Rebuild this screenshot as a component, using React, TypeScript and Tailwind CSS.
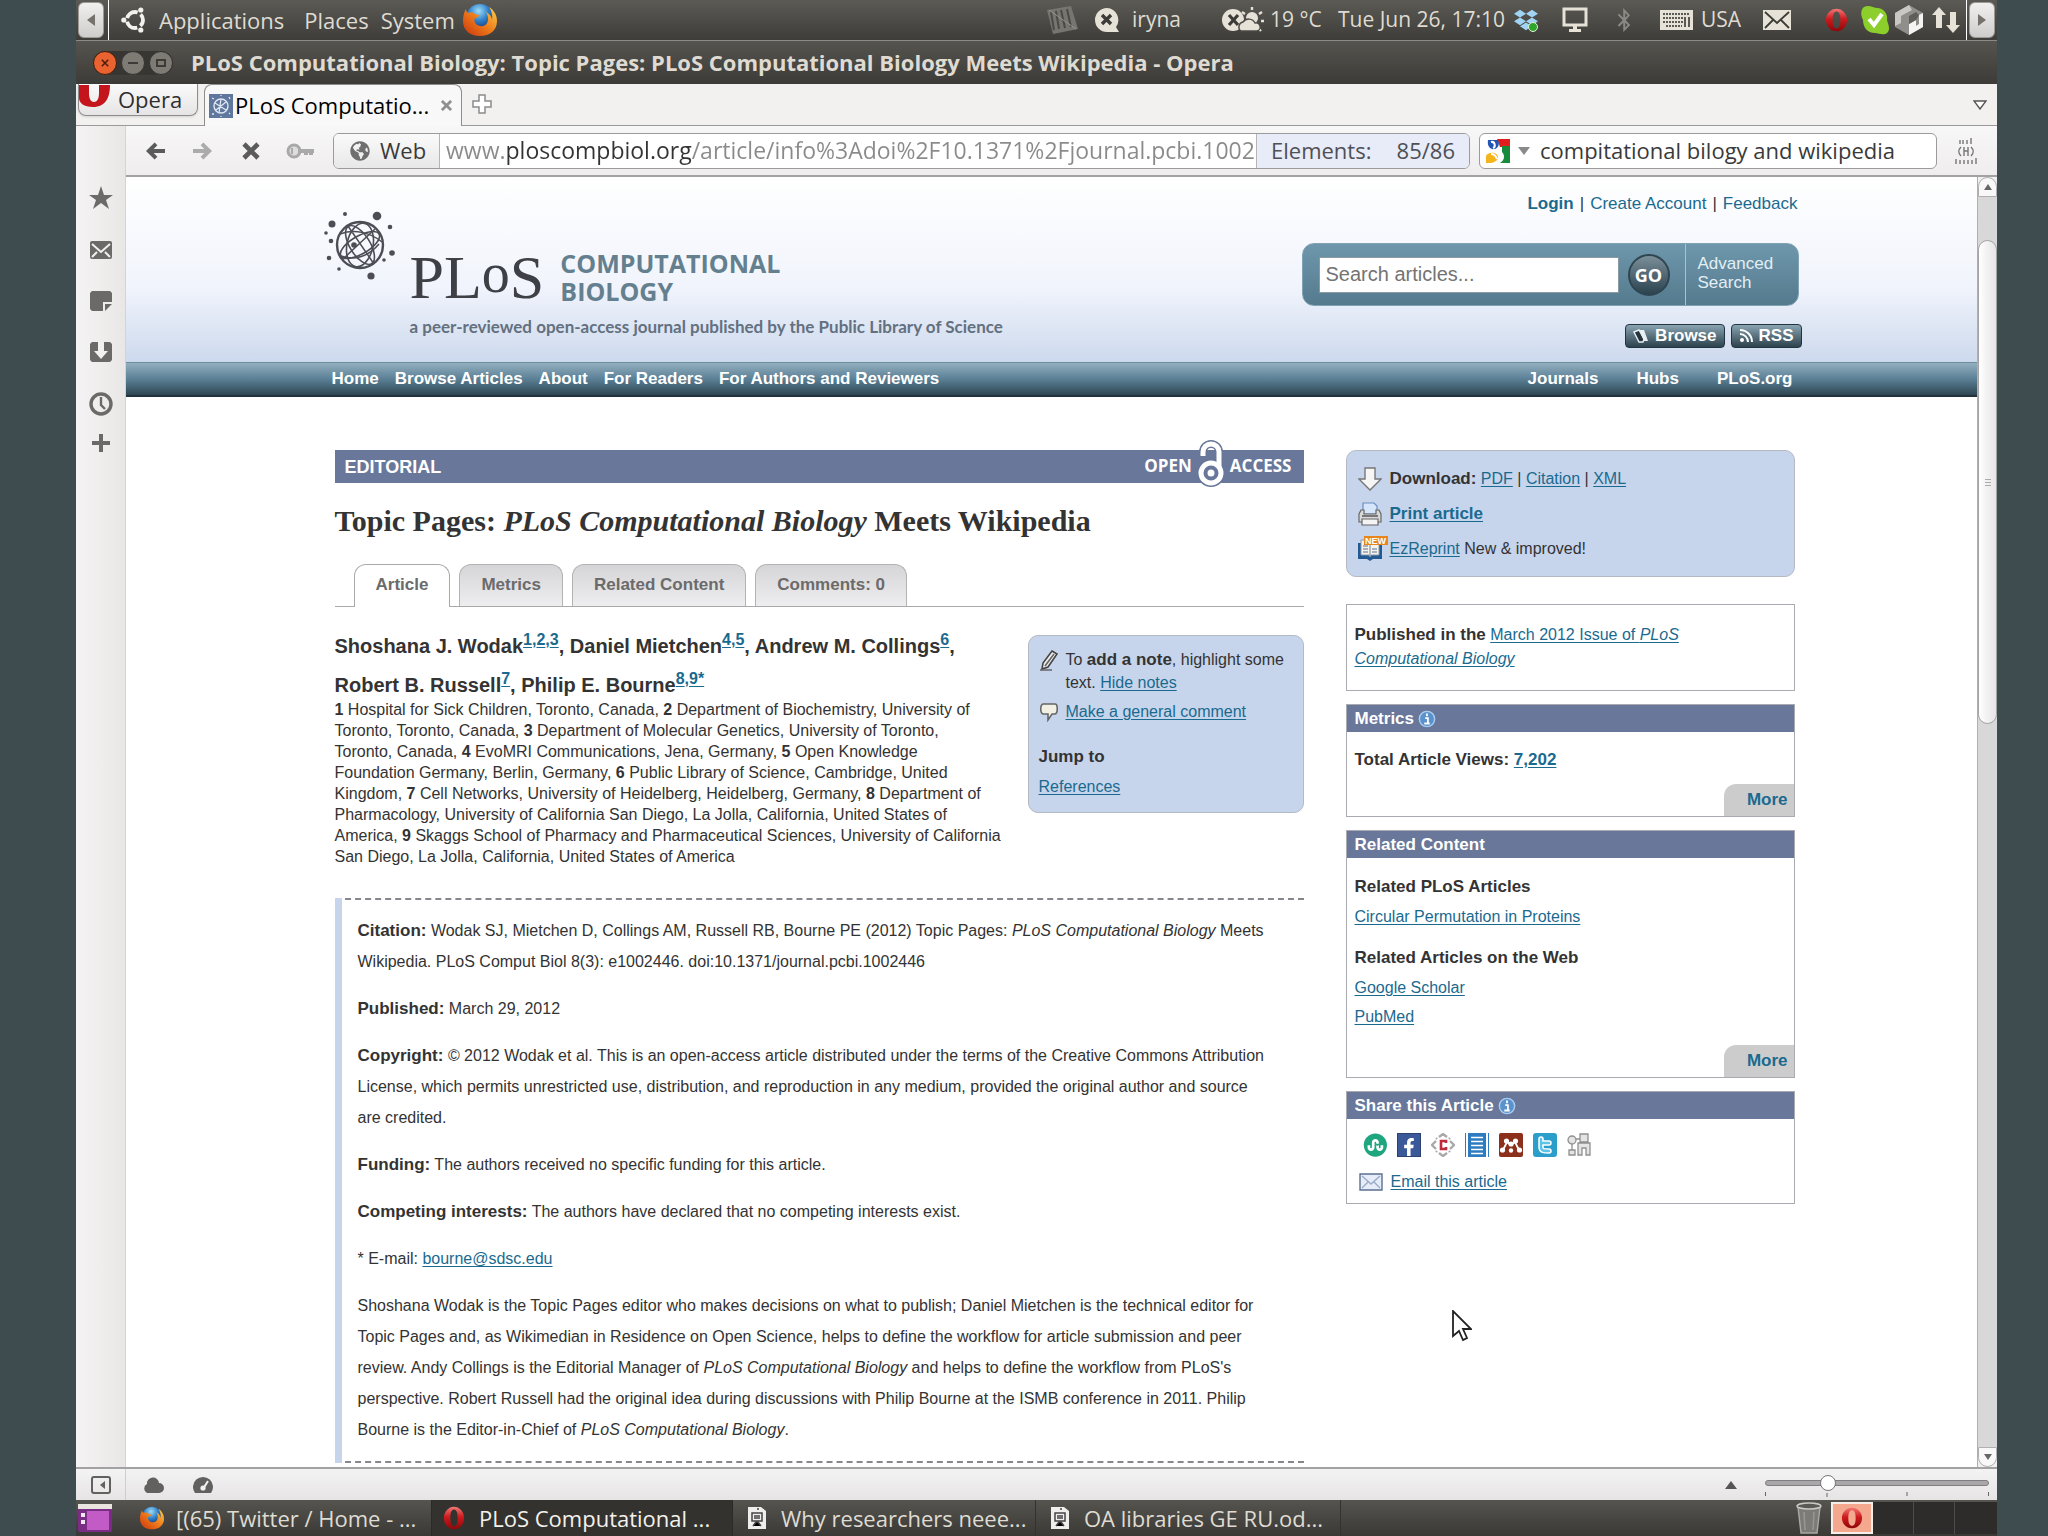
import { Fragment, type ReactNode } from "react";
import { FaBluetoothB, FaDropbox, FaFacebookF, FaGlobeAmericas, FaStumbleuponCircle } from "react-icons/fa";

const uiFont = "font-['Open_Sans','Noto_Sans',sans-serif]";
const pageFont = "font-['Liberation_Sans',Arial,sans-serif]";

const link = "text-[#1a6a8f] underline underline-offset-2";

function UbuntuIcon({ className }: { className: string }) {
  return (
    <svg viewBox="0 0 26 26" className={className} aria-hidden="true">
      <circle cx="14" cy="13" r="8" fill="none" stroke="#f3f1ec" strokeWidth="3.8" strokeDasharray="13.25 3.5" strokeDashoffset="6.6" />
      <circle cx="2.8" cy="13" r="2.6" fill="#f3f1ec" />
      <circle cx="19.8" cy="3" r="2.6" fill="#f3f1ec" />
      <circle cx="19.8" cy="23" r="2.6" fill="#f3f1ec" />
    </svg>
  );
}

function FirefoxIcon({ className }: { className: string }) {
  return (
    <svg viewBox="0 0 34 34" className={className} aria-hidden="true">
      <defs>
        <radialGradient id="globe" cx="45%" cy="25%" r="70%">
          <stop offset="0" stopColor="#9fdcf7" />
          <stop offset="0.5" stopColor="#2f7fc9" />
          <stop offset="1" stopColor="#12306f" />
        </radialGradient>
        <linearGradient id="fox" x1="0" y1="1" x2="1" y2="0">
          <stop offset="0" stopColor="#c9330c" />
          <stop offset="0.5" stopColor="#ee7a1b" />
          <stop offset="1" stopColor="#fbd24a" />
        </linearGradient>
      </defs>
      <circle cx="17" cy="15" r="14" fill="url(#globe)" />
      <path
        d="M3 6c0 2 1 3 2 4 2-1 5-1 7 1l4 1c0 2-2 3-4 3-1 2-1 4 1 6 3 3 9 3 11-1 2-3 1-8-1-11 4 2 6 5 6 8 1-5-1-10-3-13 5 3 8 8 8 14 0 9-7 15-17 15S0 27 0 18C0 13 1 9 3 6z"
        fill="url(#fox)"
      />
    </svg>
  );
}

function OperaIcon({ className }: { className: string }) {
  return (
    <svg viewBox="0 0 24 34" preserveAspectRatio="none" className={className} aria-hidden="true">
      <defs>
        <linearGradient id="opera" x1="0" y1="0" x2="0" y2="1">
          <stop offset="0" stopColor="#f07a78" />
          <stop offset="0.45" stopColor="#cf1a1d" />
          <stop offset="1" stopColor="#8d0709" />
        </linearGradient>
      </defs>
      <path
        fillRule="evenodd"
        d="M12 1c6 0 11 7 11 16s-5 16-11 16S1 26 1 17 6 1 12 1zm0 4c-3 0-4 5-4 12s1 12 4 12 4-5 4-12-1-12-4-12z"
        fill="url(#opera)"
      />
    </svg>
  );
}

function PanelArrow({ left }: { left?: boolean }) {
  return (
    <button
      aria-label={left ? "Hide panel left" : "Hide panel right"}
      className="flex h-9 w-[26px] shrink-0 items-center justify-center rounded-md border border-[#9c9a97] bg-gradient-to-b from-[#f1f0ef] to-[#cfcdcb]"
    >
      <svg viewBox="0 0 10 12" className="h-3 w-2.5" aria-hidden="true">
        <path d={left ? "M9 0v12L1 6z" : "M1 0v12l8-6z"} fill="#75726e" />
      </svg>
    </button>
  );
}

function TopPanel() {
  return (
    <header className="flex h-10 items-center justify-between bg-gradient-to-b from-[#5b5a55] to-[#3e3d39] px-0.5 text-[#dfdbd2]">
      <div className="flex h-full items-center text-[22px]">
        <PanelArrow left />
        <nav className="ml-1 flex h-full items-center border-l border-white pl-3">
          <UbuntuIcon className="size-[26px]" />
          <a href="#" className="ml-3">Applications</a>
          <a href="#" className="ml-5">Places</a>
          <a href="#" className="ml-3">System</a>
          <FirefoxIcon className="ml-2 size-[34px]" />
        </nav>
      </div>
      <div className="flex h-full items-center text-[21px]">
        <svg viewBox="0 0 31 28" className="h-7 w-[31px]" aria-hidden="true">
          <path d="M0 4l24-4 7 23-25 5z" fill="#77756f" />
          <path d="M4 6l3 18M9 5l3 18M14 4l4 18M20 3l4 18" stroke="#4b4a46" strokeWidth="2" />
          <path d="M2 4l27 19" stroke="#97948e" strokeWidth="1" />
        </svg>
        <svg viewBox="0 0 26 26" className="ml-4 size-[26px]" aria-hidden="true">
          <path d="M13 1a12 12 0 1 0 0 24h12l-3-5A12 12 0 0 0 13 1z" fill="#e6e2d8" />
          <path d="M8 8l9 9M17 8l-9 9" stroke="#3c3b37" strokeWidth="3.4" />
        </svg>
        <span className="ml-3 w-12">iryna</span>
        <svg viewBox="0 0 44 28" className="ml-[42px] h-7 w-11" aria-hidden="true">
          <circle cx="11" cy="14" r="11" fill="#e6e2d8" />
          <path d="M7 9l9 10M16 9L7 19" stroke="#3c3b37" strokeWidth="3.2" />
          <circle cx="30" cy="12" r="6" fill="#e6e2d8" />
          <path d="M30 1v3M20 6l3 2M40 6l-3 2M42 15h-3M37 23l2 2" stroke="#e6e2d8" strokeWidth="2.4" />
          <path d="M19 25a5 5 0 0 1 2-9 7 7 0 0 1 12 1 4 4 0 0 1 2 8z" fill="#e6e2d8" stroke="#4a4945" strokeWidth="1.4" />
        </svg>
        <span className="ml-1 w-[68px] whitespace-nowrap">19 °C</span>
        <span className="w-[176px] whitespace-nowrap">Tue Jun 26, 17:10</span>
        <span className="relative">
          <FaDropbox className="size-6 text-[#9fd4f5]" />
          <span className="absolute right-0 bottom-0 size-2.5 rounded-full border border-[#dff2d8] bg-[#2fa52b]" />
        </span>
        <svg viewBox="0 0 26 26" className="ml-6 size-[26px]" aria-hidden="true">
          <path d="M2 2h22v16H2z" fill="none" stroke="#e6e2d8" strokeWidth="3" />
          <path d="M11 19h4v3h4v3H7v-3h4z" fill="#e6e2d8" />
        </svg>
        <FaBluetoothB className="ml-6 size-6 text-[#8b8983]" />
        <svg viewBox="0 0 33 20" className="ml-6 h-5 w-[33px]" aria-hidden="true">
          <path d="M0 0h33v20H0z" fill="#e6e2d8" />
          <path d="M3 4h27M3 8h20M3 12h20M6 16h16" stroke="#5a5954" strokeWidth="2" strokeDasharray="2 1" />
          <path d="M25 7v10M29 7v10" stroke="#5a5954" strokeWidth="2" />
        </svg>
        <span className="ml-2 w-[42px]">USA</span>
        <svg viewBox="0 0 28 20" className="ml-5 h-5 w-7" aria-hidden="true">
          <path d="M0 0h28v20H0z" fill="#e6e2d8" />
          <path d="M2 2l12 11L26 2M2 18l8-8M26 18l-8-8" fill="none" stroke="#3c3b37" strokeWidth="1.8" />
        </svg>
        <OperaIcon className="ml-[34px] h-6 w-[23px]" />
        <svg viewBox="0 0 30 30" className="ml-3 size-[30px]" aria-hidden="true">
          <path d="M4 2c5-3 9 1 14 1 7 1 10 7 9 12 1 4 4 9 0 13-4 3-8 0-12 0C7 28 3 22 3 15 1 11 0 5 4 2z" fill="#8cce2c" />
          <path d="M9 14l5 6 8-11" fill="none" stroke="#fff" strokeWidth="4" />
        </svg>
        <svg viewBox="0 0 30 32" className="ml-1 h-8 w-[30px]" aria-hidden="true">
          <path d="M15 1l14 8v14l-14 8-14-8V9z" fill="#8f8e8b" />
          <path d="M15 1L1 9v13l6-3v-7l11-6z" fill="#c9c8c5" />
          <path d="M29 9v14l-14 8V20l7-4v6l3-2v-9z" fill="#f5f4f2" />
          <path d="M15 12l7-4 3 3-3 5-7 4z" fill="#5f5e5b" />
        </svg>
        <svg viewBox="0 0 28 26" className="ml-2 h-[26px] w-7" aria-hidden="true">
          <path d="M7 0l7 8h-4v13H4V8H0zM21 26l-7-8h4V5h6v13h4z" fill="#e6e2d8" />
        </svg>
        <div className="ml-1.5 flex h-full items-center border-l border-white pl-0.5">
          <PanelArrow />
        </div>
      </div>
    </header>
  );
}

function TitleBar() {
  return (
    <div className="flex h-11 items-center border-t border-[#8b8a86] bg-gradient-to-b from-[#55544f] to-[#3c3b37] px-[17px] text-[#dfdbd2]">
      <div className="flex gap-1 rounded-full bg-[#373632]">
        <button aria-label="Close" className="flex size-6 items-center justify-center rounded-full border border-[#3a1f12] bg-[#e9622f]">
          <svg viewBox="0 0 10 10" className="size-2" aria-hidden="true">
            <path d="M1 1l8 8M9 1L1 9" stroke="#4a1f0e" strokeWidth="2" />
          </svg>
        </button>
        <button aria-label="Minimize" className="flex size-6 items-center justify-center rounded-full border border-[#33322f] bg-[#7d7b74]">
          <span className="h-0.5 w-2.5 bg-[#3c3b37]" />
        </button>
        <button aria-label="Maximize" className="flex size-6 items-center justify-center rounded-full border border-[#33322f] bg-[#7d7b74]">
          <span className="h-2 w-2.5 border-2 border-[#3c3b37]" />
        </button>
      </div>
      <h1 className="ml-[18px] text-[22px] font-bold whitespace-nowrap">
        PLoS Computational Biology: Topic Pages: PLoS Computational Biology Meets Wikipedia - Opera
      </h1>
    </div>
  );
}

function TabBar() {
  return (
    <div className="flex h-[42px] items-start border-b border-[#9b999a] bg-[#f3f1f0] pl-0.5 text-[22px] text-[#2f2f2f]">
      <button className="flex h-8 w-[120px] items-center overflow-hidden rounded-b-lg border border-t-0 border-[#8e8c8c] bg-gradient-to-b from-[#fbfbfb] to-[#e6e4e4] shadow-sm">
        <svg viewBox="0 0 31 24" className="mb-2 h-6 w-[31px]" aria-hidden="true">
          <path d="M0 1h10v8c0 6 2 9 5 9s5-3 5-9V1h11c0 12-4 22-17 22C5 23 0 19 0 14z" fill="#c3151b" />
        </svg>
        <span className="ml-2">Opera</span>
      </button>
      <div className="ml-1.5 flex h-[42px] w-[258px] items-center rounded-t-lg border border-b-0 border-[#8e8c8c] bg-[#f9f8f9] pl-1">
        <svg viewBox="0 0 24 24" className="size-6 shrink-0" aria-hidden="true">
          <path d="M0 0h24v24H0z" fill="#5f779d" />
          <circle cx="12" cy="12" r="7" fill="none" stroke="#dfe7f3" strokeWidth="1.4" />
          <path d="M6 9l11 7M7 16L17 8M12 5l-2 14M3 4l2 1M20 3l1 2M3 20h2M20 20l1-1M12 1v1M12 22v1" stroke="#dfe7f3" strokeWidth="1.3" />
        </svg>
        <span className="ml-0.5 w-[206px] whitespace-nowrap text-black">PLoS Computatio...</span>
        <button aria-label="Close tab">
          <svg viewBox="0 0 12 12" className="size-[11px]" aria-hidden="true">
            <path d="M1 1l10 10M11 1L1 11" stroke="#8f8f8f" strokeWidth="3" />
          </svg>
        </button>
      </div>
      <button aria-label="New tab" className="mt-2.5 ml-2.5">
        <svg viewBox="0 0 20 20" className="size-5" aria-hidden="true">
          <path d="M7 1h6v6h6v6h-6v6H7v-6H1V7h6z" fill="#fff" stroke="#8b8b8b" strokeWidth="1.5" />
        </svg>
      </button>
      <button aria-label="Closed tabs" className="mt-4 mr-2.5 ml-auto">
        <svg viewBox="0 0 14 10" className="h-2.5 w-3.5" aria-hidden="true">
          <path d="M1 1h12L7 9z" fill="#fff" stroke="#555" strokeWidth="1.4" />
        </svg>
      </button>
    </div>
  );
}

function AddressBar() {
  return (
    <div className="flex h-[51px] items-center border-b-2 border-[#a3a1a3] bg-gradient-to-b from-[#f8f7f8] to-[#efeded] pr-[18px] pl-5 text-[22px] text-[#3a3a3a]">
      <button aria-label="Back">
        <svg viewBox="0 0 22 20" className="h-[18px] w-5" aria-hidden="true">
          <path d="M21 10H4M11 2l-8 8 8 8" fill="none" stroke="#5b5b5b" strokeWidth="4.4" />
        </svg>
      </button>
      <button aria-label="Forward" className="ml-[26px]">
        <svg viewBox="0 0 22 20" className="h-[18px] w-5" aria-hidden="true">
          <path d="M1 10h17M11 2l8 8-8 8" fill="none" stroke="#ababab" strokeWidth="4.4" />
        </svg>
      </button>
      <button aria-label="Stop" className="ml-[30px]">
        <svg viewBox="0 0 18 18" className="size-[18px]" aria-hidden="true">
          <path d="M2 2l14 14M16 2L2 16" stroke="#5b5b5b" strokeWidth="4.6" />
        </svg>
      </button>
      <button aria-label="Wand" className="ml-[26px]">
        <svg viewBox="0 0 30 16" className="h-4 w-[30px]" aria-hidden="true">
          <circle cx="8" cy="8" r="6" fill="#ddd" stroke="#a9a9a9" strokeWidth="3" />
          <path d="M12 8h16M20 8v4M25 8v4" stroke="#a9a9a9" strokeWidth="4" />
          <path d="M6 5v6" stroke="#999" strokeWidth="1.5" />
        </svg>
      </button>
      <div className="ml-[17px] flex h-9 min-w-0 flex-1 overflow-hidden rounded-md border border-[#9b9a9d] bg-white">
        <button className="flex w-[106px] shrink-0 items-center border-r border-[#b5b4b6] bg-gradient-to-b from-[#fafafa] to-[#e9e8e9] pl-4">
          <FaGlobeAmericas className="size-5 text-[#6f6f6f]" />
          <span className="ml-2.5">Web</span>
        </button>
        <input
          aria-label="Address"
          defaultValue="www.ploscompbiol.org/article/info%3Adoi%2F10.1371%2Fjournal.pcbi.1002"
          className="min-w-0 flex-1 bg-[linear-gradient(90deg,#8a8a8a_67px,#333_67px,#333_252px,#8a8a8a_252px)] bg-clip-text pl-1.5 text-[23px] text-transparent outline-none"
        />
        <div className="flex w-[213px] shrink-0 items-center justify-between border-l border-[#b5b4b6] bg-[#e8ecf8] px-3.5 text-[#4f4f55]">
          <span>Elements:</span>
          <span>85/86</span>
        </div>
      </div>
      <div className="ml-[9px] flex h-9 w-[458px] shrink-0 items-center rounded-md border border-[#9b9a9d] bg-white pl-1.5">
        <svg viewBox="0 0 24 24" className="size-6 shrink-0" aria-hidden="true">
          <path d="M0 0h24v24H0z" fill="#fff" />
          <path d="M11 0h13v8H14z" fill="#e01f1d" />
          <path d="M16 7h8v17H14c6-4 4-9 2-11z" fill="#188a3b" />
          <path d="M2 1h10c2 4 0 8-3 9-5 1-8-3-7-9z" fill="#2156b5" />
          <path d="M0 17c1-4 11-5 12 1 0 4-5 6-9 6H0z" fill="#f4b51c" />
          <path d="M5 3c4-1 5 5 2 6M5 15c3 0 5 2 6 5" fill="none" stroke="#fff" strokeWidth="2" />
        </svg>
        <svg viewBox="0 0 12 8" className="ml-2 h-2 w-3 shrink-0" aria-hidden="true">
          <path d="M0 0h12L6 8z" fill="#8a8a8a" />
        </svg>
        <input
          aria-label="Web search"
          defaultValue="compitational bilogy and wikipedia"
          className="ml-2.5 min-w-0 flex-1 text-[22px] text-[#3a3a3a] outline-none"
        />
      </div>
      <svg viewBox="0 0 26 26" className="ml-4 size-[26px] shrink-0" aria-hidden="true">
        <path d="M7 2v4M10 2v4M14 2v4M18 0v6M8 9c-3 3-3 6 0 9M18 9c3 3 3 6 0 9M11 9v9M15 9v9M11 13h4M3 21v5M7 22v4M11 22v4M15 22v4M19 22v4M23 20v6" stroke="#777" strokeWidth="1.4" fill="none" />
      </svg>
    </div>
  );
}

function SideBar() {
  return (
    <aside className="flex w-[50px] shrink-0 flex-col items-center border-r border-[#d6d4d3] bg-gradient-to-r from-[#f5f4f4] to-[#e9e7e6] pt-[60px] text-[#6b6a68]">
      <svg viewBox="0 0 24 24" className="size-6" aria-hidden="true">
        <path d="M12 0l3 9h9l-7 5 3 9-8-6-8 6 3-9-7-5h9z" fill="currentColor" />
      </svg>
      <svg viewBox="0 0 22 18" className="mt-[31px] h-[18px] w-[22px]" aria-hidden="true">
        <rect width="22" height="18" rx="2" fill="currentColor" />
        <path d="M2 3l9 8 9-8M2 16l5-5M20 16l-5-5" fill="none" stroke="#f2f1f0" strokeWidth="2" />
      </svg>
      <svg viewBox="0 0 22 20" className="mt-8 h-5 w-[22px]" aria-hidden="true">
        <path d="M2 0h18l2 2v9h-9v9H2l-2-2V2z" fill="currentColor" />
        <path d="M15 20v-7h7z" fill="currentColor" />
      </svg>
      <svg viewBox="0 0 22 20" className="mt-[31px] h-5 w-[22px]" aria-hidden="true">
        <path d="M2 0h18l2 2v16l-2 2H2l-2-2V2z" fill="currentColor" />
        <path d="M8 0h6v9h4l-7 8-7-8h4z" fill="#f2f1f0" />
      </svg>
      <svg viewBox="0 0 24 24" className="mt-[30px] size-6" aria-hidden="true">
        <circle cx="12" cy="12" r="10" fill="none" stroke="currentColor" strokeWidth="3.4" />
        <path d="M12 5v8l4 4" fill="none" stroke="currentColor" strokeWidth="2.4" />
      </svg>
      <svg viewBox="0 0 18 18" className="mt-[18px] size-[18px]" aria-hidden="true">
        <path d="M7 0h4v7h7v4h-7v7H7v-7H0V7h7z" fill="currentColor" />
      </svg>
    </aside>
  );
}

const logoDots = [
  [21, 3, 2], [53, 5, 4.3], [8, 13, 3.5], [66, 16, 2.3], [2, 22, 1.8], [7, 30, 2.3],
  [68, 42, 2.8], [5, 47, 2.3], [60, 49, 1.8], [15, 58, 1.8], [47, 65, 3.6],
];

function PlosLogo() {
  return (
    <a href="#" aria-label="PLoS Computational Biology" className="flex text-[#3f4046]">
      <svg viewBox="0 0 72 72" className="size-[72px]" aria-hidden="true">
        {logoDots.map(([x, y, r]) => (
          <circle key={`${x}-${y}`} cx={x} cy={y} r={r} fill="#4c4d55" />
        ))}
        <g fill="none" stroke="#4c4d55">
          <circle cx="36" cy="34" r="23" strokeWidth="2.4" />
          <ellipse cx="36" cy="34" rx="22" ry="9" strokeWidth="1.6" transform="rotate(-30 36 34)" />
          <ellipse cx="36" cy="34" rx="22" ry="10" strokeWidth="1.6" transform="rotate(58 36 34)" />
          <ellipse cx="36" cy="34" rx="13" ry="22" strokeWidth="1.6" transform="rotate(12 36 34)" />
          <path d="M16 23c14-5 30-2 42 8M17 45c12 4 26 2 38-12M24 15l26 38M19 48l32-30" strokeWidth="1.5" />
        </g>
        <circle cx="30" cy="34" r="2.8" fill="#4c4d55" />
      </svg>
      <span className="mt-[34px] ml-3.5">
        <span className="flex">
          <span className="font-['Liberation_Serif',serif] text-[62px] leading-[60px]">
            PL<span className="align-[6px] text-[56px] leading-none">o</span>S
          </span>
          <span className="mt-1 ml-4 font-['Open_Sans',sans-serif] text-[25px] leading-7 font-bold text-[#64808f]">
            COMPUTATIONAL
            <br />
            BIOLOGY
          </span>
        </span>
        <span className="mt-2 block font-['Lato',sans-serif] text-[17px] leading-6 font-bold text-[#63707f]">
          a peer-reviewed open-access journal published by the Public Library of Science
        </span>
      </span>
    </a>
  );
}

function PageHeader() {
  return (
    <div className="bg-gradient-to-b from-white via-[#f1f4fc] to-[#bccde6]">
      <div className="mx-auto flex h-[185px] max-w-[1500px] justify-between pl-[22px]">
        <div className="pt-[34px]">
          <PlosLogo />
        </div>
        <div className="flex flex-col items-end pt-[17px] text-[#1a6a8f]">
          <div className="mr-1 flex gap-1.5 text-[17px] leading-5">
            <a href="#" className="font-bold">Login</a>
            <span className="text-[#333]">|</span>
            <a href="#">Create Account</a>
            <span className="text-[#333]">|</span>
            <a href="#">Feedback</a>
          </div>
          <form className="mt-[29px] mr-[3px] flex h-[63px] w-[497px] items-center rounded-xl border border-[#7fa3b4] bg-gradient-to-b from-[#6f97ab] to-[#547a8e] pl-4">
            <input
              aria-label="Search articles"
              placeholder="Search articles..."
              className="h-9 w-[300px] border border-[#8a9aa3] bg-white px-1.5 text-[20px] text-[#555] outline-none placeholder:text-[#737373]"
            />
            <button type="button" className="ml-[9px] size-[42px] rounded-full border-2 border-[#2f4652] bg-gradient-to-b from-[#7b8f99] to-[#2b4450] font-['Open_Sans',sans-serif] text-lg font-bold text-white">
              GO
            </button>
            <a href="#" className="ml-[15px] flex h-full flex-col justify-start border-l border-[#a9c4d0] pt-2.5 pl-3 text-[17px] leading-[19px] text-[#e3eff6]">
              <span>Advanced</span>
              <span>Search</span>
            </a>
          </form>
          <div className="mt-[18px] flex gap-1.5 text-[17px] font-bold text-white">
            <a href="#" className="flex h-6 items-center gap-1.5 rounded border border-[#22343e] bg-gradient-to-b from-[#8ba5b3] to-[#2d434e] px-[7px]">
              <svg viewBox="0 0 16 14" className="h-3.5 w-4" aria-hidden="true">
                <path d="M1 3l5-2 5 9-1 3H6z" fill="#22343e" stroke="#e9eff3" strokeWidth="1.4" />
                <path d="M6 1h5l4 11h-4z" fill="#e9eff3" />
              </svg>
              Browse
            </a>
            <a href="#" className="flex h-6 items-center gap-1.5 rounded border border-[#22343e] bg-gradient-to-b from-[#8ba5b3] to-[#2d434e] px-[7px]">
              <svg viewBox="0 0 14 14" className="size-3.5" aria-hidden="true">
                <circle cx="3" cy="11" r="2" fill="#fff" />
                <path d="M1 5a8 8 0 0 1 8 8M1 1a12 12 0 0 1 12 12" fill="none" stroke="#fff" strokeWidth="2" />
              </svg>
              RSS
            </a>
          </div>
        </div>
      </div>
      <nav className="h-[35px] border-t border-b-2 border-t-[#6d8c9d] border-b-[#23333b] bg-gradient-to-b from-[#93afbf] via-[#5b8096] to-[#2f4753]">
        <div className="mx-auto flex h-full max-w-[1500px] items-center justify-between pr-[9px] pl-[30px] text-[17px] font-bold text-white">
          <div className="flex gap-4">
            <a href="#">Home</a>
            <a href="#">Browse Articles</a>
            <a href="#">About</a>
            <a href="#">For Readers</a>
            <a href="#">For Authors and Reviewers</a>
          </div>
          <div className="flex gap-[38px]">
            <a href="#">Journals</a>
            <a href="#">Hubs</a>
            <a href="#">PLoS.org</a>
          </div>
        </div>
      </nav>
    </div>
  );
}

const tabs = ["Metrics", "Related Content", "Comments: 0"];

const authors = [
  { name: "Shoshana J. Wodak", refs: ["1", "2", "3"] },
  { name: "Daniel Mietchen", refs: ["4", "5"] },
  { name: "Andrew M. Collings", refs: ["6"], last: true },
  { name: "Robert B. Russell", refs: ["7"] },
  { name: "Philip E. Bourne", refs: ["8", "9*"] },
];

function Authors() {
  return (
    <p className="-mt-2 text-[20px] leading-[39px] font-bold">
      {authors.map(({ name, refs, last }, i) => (
        <Fragment key={name}>
          {name}
          <span className="align-[8px] text-base leading-none text-[#1a6a8f]">
            {refs.map((ref, j) => (
              <Fragment key={ref}>
                {j > 0 && ","}
                <a href="#" className="underline underline-offset-2">{ref}</a>
              </Fragment>
            ))}
          </span>
          {i < authors.length - 1 && ", "}
          {last && <br />}
        </Fragment>
      ))}
    </p>
  );
}

function Article() {
  return (
    <article className="min-w-0 flex-1">
      <div className="flex h-[33px] items-center justify-between bg-[#68779a] pr-3 pl-2.5 text-lg font-bold text-white">
        <span>EDITORIAL</span>
        <span className="flex items-center gap-[3px] font-['Open_Sans',sans-serif] text-[17px] font-bold">
          OPEN
          <svg viewBox="1 4 32 52" className="-my-3 h-[54px] w-8" aria-hidden="true">
            <g fill="none">
              <path d="M9 19v-4a8 8 0 0 1 16 0v20" stroke="#68779a" strokeWidth="8" />
              <circle cx="17" cy="36" r="10" fill="#fff" stroke="#68779a" strokeWidth="8" />
              <path d="M9 19v-4a8 8 0 0 1 16 0v20" stroke="#fff" strokeWidth="5" />
              <circle cx="17" cy="36" r="10" fill="#68779a" stroke="#fff" strokeWidth="5" />
            </g>
            <circle cx="17" cy="36" r="3.5" fill="#fff" />
          </svg>
          ACCESS
        </span>
      </div>
      <h2 className="mt-[18px] font-['Liberation_Serif',serif] text-[30px] leading-10 font-bold text-[#333]">
        Topic Pages: <em>PLoS Computational Biology</em> Meets Wikipedia
      </h2>
      <div className="mt-[23px] flex h-[43px] gap-[9px] border-b border-[#a9a9a9] pl-[19px] text-[17px] font-bold text-[#6b6b6b]">
        <a href="#" className="-mb-px flex items-start rounded-t-xl border border-b-0 border-[#a9a9a9] bg-white px-[21px] pt-[7px]">
          Article
        </a>
        {tabs.map((tab) => (
          <a key={tab} href="#" className="flex items-start rounded-t-xl border border-b-0 border-[#b3b3b3] bg-gradient-to-b from-[#d5d4d6] to-[#eeedef] px-[21px] pt-[7px]">
            {tab}
          </a>
        ))}
      </div>
      <div className="mt-7 flex items-start justify-between">
        <div className="w-[680px] text-[#333]">
          <Authors />
          <p className="-mt-1.5 text-base leading-[21px]">
            <b>1</b> Hospital for Sick Children, Toronto, Canada, <b>2</b> Department of Biochemistry, University of Toronto, Toronto, Canada, <b>3</b> Department of Molecular Genetics, University of Toronto,
            <br />
            Toronto, Canada, <b>4</b> EvoMRI Communications, Jena, Germany, <b>5</b> Open Knowledge
            <br />
            Foundation Germany, Berlin, Germany, <b>6</b> Public Library of Science, Cambridge, United Kingdom, <b>7</b> Cell Networks, University of Heidelberg, Heidelberg, Germany, <b>8</b> Department of Pharmacology, University of California San Diego, La Jolla, California, United States of
            <br />
            America, <b>9</b> Skaggs School of Pharmacy and Pharmaceutical Sciences, University of California San Diego, La Jolla, California, United States of America
          </p>
        </div>
        <div className="h-[178px] w-[276px] shrink-0 rounded-[10px] border border-[#b4b9c4] bg-[#c7d5ec] pt-3 pl-2.5 text-base leading-[23px] text-[#333] [&_b]:text-[17px]">
          <div className="flex">
            <svg viewBox="0 0 20 22" className="mt-px h-[22px] w-5 shrink-0" aria-hidden="true">
              <path d="M13 2l5 3L9 18l-6 2 1-6z" fill="#eee" stroke="#444" strokeWidth="1.6" />
              <path d="M15 5L6 17M1 21h12" stroke="#666" strokeWidth="1.6" />
            </svg>
            <p className="ml-[7px]">
              To <b>add a note</b>, highlight some
              <br />
              text. <a href="#" className={link}>Hide notes</a>
            </p>
          </div>
          <div className="mt-1.5 flex">
            <svg viewBox="0 0 20 20" className="mt-0.5 size-5 shrink-0" aria-hidden="true">
              <path d="M4 2h12c3 0 3 9 0 10h-3l-4 6v-6H4C1 11 1 3 4 2z" fill="#f2f0e4" stroke="#666" strokeWidth="1.6" />
            </svg>
            <a href="#" className={`ml-[7px] ${link}`}>Make a general comment</a>
          </div>
          <p className="mt-[22px] text-[17px] font-bold">Jump to</p>
          <a href="#" className={`mt-[7px] inline-block ${link}`}>References</a>
        </div>
      </div>
      <div className="mt-[31px] flex border-y-2 border-dashed border-[#85878d]">
        <div className="-my-0.5 w-[7px] shrink-0 bg-[#c7d5ec]" />
        <div className="flex flex-1 flex-col gap-4 pt-[15px] pr-9 pb-4 pl-4 text-base leading-[31px] text-[#333] [&_b]:text-[17px]">
          <p>
            <b>Citation:</b> Wodak SJ, Mietchen D, Collings AM, Russell RB, Bourne PE (2012) Topic Pages: <i>PLoS Computational Biology</i> Meets Wikipedia. PLoS Comput Biol 8(3): e1002446. doi:10.1371/journal.pcbi.1002446
          </p>
          <p><b>Published:</b> March 29, 2012</p>
          <p>
            <b>Copyright:</b> © 2012 Wodak et al. This is an open-access article distributed under the terms of the Creative Commons Attribution License, which permits unrestricted use, distribution, and reproduction in any medium, provided the original author and source are credited.
          </p>
          <p><b>Funding:</b> The authors received no specific funding for this article.</p>
          <p><b>Competing interests:</b> The authors have declared that no competing interests exist.</p>
          <p>* E-mail: <a href="#" className={link}>bourne@sdsc.edu</a></p>
          <p>
            Shoshana Wodak is the Topic Pages editor who makes decisions on what to publish; Daniel Mietchen is the technical editor for Topic Pages and, as Wikimedian in Residence on Open Science, helps to define the workflow for article submission and peer review. Andy Collings is the Editorial Manager of <i>PLoS Computational Biology</i> and helps to define the workflow from PLoS's perspective. Robert Russell had the original idea during discussions with Philip Bourne at the ISMB conference in 2011. Philip Bourne is the Editor-in-Chief of <i>PLoS Computational Biology</i>.
          </p>
        </div>
      </div>
    </article>
  );
}

function InfoIcon() {
  return (
    <svg viewBox="0 0 20 20" className="size-[18px]" aria-hidden="true">
      <circle cx="10" cy="10" r="8.5" fill="#5b92cb" stroke="#a9cdf0" strokeWidth="1.6" />
      <path d="M10 4v3M8 9h3v6M7 15h6" fill="none" stroke="#fff" strokeWidth="2" />
    </svg>
  );
}

function Box({ title, info, more, children }: { title: string; info?: boolean; more?: boolean; children: ReactNode }) {
  return (
    <section className="mt-[13px] border border-[#a9abb1] leading-6">
      <h3 className="flex h-[27px] items-center gap-1 bg-[#68779a] px-2 text-[17px] font-bold text-white">
        {title}
        {info && <InfoIcon />}
      </h3>
      {children}
      {more && (
        <div className="flex justify-end">
          <a href="#" className="flex h-8 w-[70px] items-center justify-end rounded-tl-xl bg-[#cdcccd] pr-1.5 text-[17px] font-bold text-[#1a6a8f]">
            More
          </a>
        </div>
      )}
    </section>
  );
}

function RightColumn() {
  return (
    <aside className="w-[449px] shrink-0 text-base text-[#333] [&_b]:text-[17px]">
      <div className="flex h-[127px] flex-col gap-[11px] rounded-[10px] border border-[#b4b9c4] bg-[#c7d5ec] pt-4 pl-[11px] leading-6">
        <div className="flex items-center gap-2">
          <svg viewBox="0 0 24 24" className="size-6" aria-hidden="true">
            <path d="M7 1h10v11h6L12 23 1 12h6z" fill="#f6f6f6" stroke="#777" strokeWidth="1.4" />
          </svg>
          <span>
            <b>Download:</b> <a href="#" className={link}>PDF</a> | <a href="#" className={link}>Citation</a> | <a href="#" className={link}>XML</a>
          </span>
        </div>
        <div className="flex items-center gap-2">
          <svg viewBox="0 0 24 24" className="size-6" aria-hidden="true">
            <path d="M5 1h11l3 3v8H5z" fill="#d5e6fa" stroke="#6a8fc0" strokeWidth="1.2" />
            <path d="M3 8h3v4h12V8h3l2 4v8H1v-8z" fill="#d9d9d9" stroke="#666" strokeWidth="1.2" />
            <path d="M4 17h16v6H4z" fill="#f4f4f4" stroke="#666" strokeWidth="1.2" />
            <path d="M4 14h16" stroke="#777" strokeWidth="2" />
          </svg>
          <a href="#" className={`text-[17px] font-bold ${link}`}>Print article</a>
        </div>
        <div className="flex items-center gap-2">
          <svg viewBox="0 0 24 24" className="size-6 overflow-visible" aria-hidden="true">
            <path d="M0 6h24v16h-9l-3 2-3-2H0z" fill="#245a94" />
            <path d="M3 3h8l1 2 1-2h8v15h-8l-1 2-1-2H3z" fill="#f5f3ea" stroke="#8a98aa" />
            <path d="M5 9h5M5 12h5M5 15h5M14 12h5M14 15h5M12 5v14" stroke="#8d9db0" strokeWidth="1.3" />
            <path d="M6 -1h24v9H6z" fill="#e8861c" />
            <text x="7" y="7" fontSize="9" fontWeight="bold" fontFamily="Liberation Sans" fill="#fff">NEW</text>
          </svg>
          <span><a href="#" className={link}>EzReprint</a> New &amp; improved!</span>
        </div>
      </div>
      <p className="mt-[27px] border border-[#a9abb1] px-2 pt-[18px] pb-[19px] leading-6">
        <b>Published in the</b>{" "}
        <a href="#" className={link}>
          March 2012 Issue of <em>PLoS<br />Computational Biology</em>
        </a>
      </p>
      <Box title="Metrics" info more>
        <p className="px-2 pt-4 pb-3 text-[17px] font-bold">
          Total Article Views: <a href="#" className={link}>7,202</a>
        </p>
      </Box>
      <Box title="Related Content" more>
        <div className="px-2 pt-[17px] pb-4">
          <h4 className="text-[17px] font-bold">Related PLoS Articles</h4>
          <p className="mt-1.5"><a href="#" className={link}>Circular Permutation in Proteins</a></p>
          <h4 className="mt-[17px] text-[17px] font-bold">Related Articles on the Web</h4>
          <p className="mt-1.5"><a href="#" className={link}>Google Scholar</a></p>
          <p className="mt-[5px]"><a href="#" className={link}>PubMed</a></p>
        </div>
      </Box>
      <Box title="Share this Article" info>
        <div className="flex gap-2.5 pt-3.5 pl-4">
          <FaStumbleuponCircle className="size-6 text-[#1fa67f]" />
          <span className="flex size-6 items-end justify-end border border-[#2b4170] bg-[#3b5998] pr-0.5">
            <FaFacebookF className="size-[18px] text-white" />
          </span>
          <svg viewBox="0 0 24 24" className="size-6" aria-hidden="true">
            <path d="M8 4l4-3 4 3M8 20l4 3 4-3M5 8l-4 4 4 4M19 8l4 4-4 4M5 5l1 1M19 5l-1 1M5 19l1-1M19 19l-1-1" fill="none" stroke="#a9a9a9" strokeWidth="2.4" />
            <path d="M15 10V8h-5v8h5v-2" fill="none" stroke="#c02a3c" strokeWidth="2.6" />
          </svg>
          <svg viewBox="0 0 24 24" className="size-6" aria-hidden="true">
            <path d="M0 0h1v24H0zM23 0h1v24h-1zM3 0h18v24H3z" fill="#2d7cc0" />
            <path d="M6 4.500h12M6 8.500h12M6 12.500h12M6 16.500h12M6 20.500h12" stroke="#fff" strokeWidth="1.6" />
          </svg>
          <svg viewBox="0 0 24 24" className="size-6" aria-hidden="true">
            <rect width="24" height="24" rx="2" fill="#8c2f1b" />
            <path d="M4 17l4-8 4 3 4-3 4 8" fill="none" stroke="#fff" strokeWidth="1.8" />
            <circle cx="7.500" cy="8" r="2.6" fill="#fff" />
            <circle cx="16.500" cy="8" r="2.6" fill="#fff" />
            <circle cx="12" cy="11" r="2.6" fill="#fff" />
            <circle cx="3.500" cy="17" r="2.6" fill="#fff" />
            <circle cx="12" cy="17.500" r="2.2" fill="#fff" />
            <circle cx="20.500" cy="17" r="2.6" fill="#fff" />
          </svg>
          <svg viewBox="0 0 24 24" className="size-6" aria-hidden="true">
            <rect width="24" height="24" rx="3" fill="#2b9ecb" />
            <path d="M8 6v8c0 4 3 4 8 4M8 10h8" fill="none" stroke="#fff" strokeWidth="5.500" strokeLinecap="round" />
            <path d="M8 6v8c0 4 3 4 8 4M8 10h8" fill="none" stroke="#5cc4e8" strokeWidth="2.4" strokeLinecap="round" />
          </svg>
          <svg viewBox="0 0 24 24" className="size-6" aria-hidden="true">
            <g fill="#e4e4e4" stroke="#8f8f8f" strokeWidth="1.3">
              <path d="M5 11v7M9 6h4" />
              <circle cx="5" cy="7" r="4" />
              <path d="M13 1h8v8h-8zM11 10h12v12h-4v-7h-4v7h-4zM2 17h6v5H2z" />
            </g>
          </svg>
        </div>
        <div className="mt-[13px] flex items-center gap-2 pb-[9px] pl-3">
          <svg viewBox="0 0 24 18" className="h-[18px] w-6" aria-hidden="true">
            <path d="M1 1h22v16H1z" fill="#e6edf9" stroke="#5c6f90" strokeWidth="1.4" />
            <path d="M3 3l9 8 9-8M3 15l6-6M21 15l-6-6" fill="none" stroke="#9aabc8" strokeWidth="1.4" />
          </svg>
          <a href="#" className={link}>Email this article</a>
        </div>
      </Box>
    </aside>
  );
}

function ScrollBar() {
  return (
    <div className="flex w-5 shrink-0 flex-col border-l border-[#b0aeae] bg-[#f1f0f0]">
      <div className="flex h-5 items-center justify-center rounded-t-full border border-[#b0aeae] bg-[#f8f8f8]">
        <svg viewBox="0 0 8 6" className="h-1.5 w-2" aria-hidden="true"><path d="M0 6h8L4 0z" fill="#666" /></svg>
      </div>
      <div className="flex flex-1 flex-col bg-[#d9d8d8]">
        <div className="mt-[43px] flex h-[484px] flex-col items-center justify-center gap-0.5 rounded-full border border-[#a5a3a4] bg-gradient-to-r from-white to-[#e6e4e6]">
          <span className="h-px w-1.5 bg-[#aaa]" />
          <span className="h-px w-1.5 bg-[#aaa]" />
          <span className="h-px w-1.5 bg-[#aaa]" />
        </div>
      </div>
      <div className="flex h-5 items-center justify-center rounded-b-full border border-[#b0aeae] bg-[#f8f8f8]">
        <svg viewBox="0 0 8 6" className="h-1.5 w-2" aria-hidden="true"><path d="M0 0h8L4 6z" fill="#666" /></svg>
      </div>
    </div>
  );
}

function StatusBar() {
  return (
    <div className="flex h-[33px] items-center border-t-2 border-[#a3a1a3] bg-gradient-to-b from-[#f4f3f4] to-[#e6e4e5] pr-2 text-[#62615f]">
      <div className="flex h-full w-[50px] items-center justify-center border-r border-[#cfcdcd]">
        <svg viewBox="0 0 20 18" className="h-[18px] w-5" aria-hidden="true">
          <rect x="1" y="1" width="18" height="16" rx="2" fill="none" stroke="currentColor" strokeWidth="2" />
          <path d="M14 5v8L9 9z" fill="currentColor" />
        </svg>
      </div>
      <svg viewBox="0 0 22 16" className="ml-4 h-4 w-[22px]" aria-hidden="true">
        <path d="M5 16a5 5 0 0 1 0-9 6 6 0 0 1 12-1 5 5 0 0 1 0 10z" fill="currentColor" />
      </svg>
      <svg viewBox="0 0 22 18" className="ml-7 h-[18px] w-[22px]" aria-hidden="true">
        <path d="M3 17a10 10 0 1 1 16 0z" fill="currentColor" />
        <path d="M11 13l5-8" stroke="#f2f1f0" strokeWidth="2" />
        <circle cx="11" cy="12" r="2.6" fill="#f2f1f0" />
      </svg>
      <svg viewBox="0 0 12 8" className="ml-auto h-2 w-3" aria-hidden="true"><path d="M0 8h12L6 0z" fill="#555" /></svg>
      <div className="ml-[28px] flex w-[224px] flex-col pt-2">
        <input
          type="range"
          aria-label="Zoom"
          defaultValue={26}
          className="h-1.5 w-full appearance-none rounded-full border border-[#807e80] bg-[#a9a7a9] [&::-webkit-slider-thumb]:size-4 [&::-webkit-slider-thumb]:appearance-none [&::-webkit-slider-thumb]:rounded-full [&::-webkit-slider-thumb]:border [&::-webkit-slider-thumb]:border-[#777] [&::-webkit-slider-thumb]:bg-white"
        />
        <svg viewBox="0 0 224 5" className="mt-1.5 h-[5px] w-full" aria-hidden="true">
          <path d="M0.500 0v4M62 1v4M142 0v4M223.500 0v4" stroke="#666" />
        </svg>
      </div>
    </div>
  );
}

function DocIcon() {
  return (
    <svg viewBox="0 0 20 24" className="h-6 w-5 shrink-0" aria-hidden="true">
      <path d="M1 1h13l5 4v18H1z" fill="#efeeec" />
      <path d="M5 7h10v8H5z" fill="none" stroke="#444" strokeWidth="1.5" />
      <path d="M7 10h6M7 12h6M6 20l3-4h2l3 4M10 3h2" stroke="#444" strokeWidth="1.5" />
    </svg>
  );
}

function TaskBar() {
  return (
    <footer className="flex h-9 items-center bg-gradient-to-b from-[#55544f] to-[#3a3935] text-[22px] whitespace-nowrap text-[#dfdbd2]">
      <svg viewBox="0 0 34 28" className="ml-0.5 h-7 w-[34px] shrink-0" aria-hidden="true">
        <rect width="34" height="28" rx="2" fill="#7a2d84" />
        <path d="M0 0h34v5H0z" fill="#e9e4dd" />
        <rect x="9" y="7" width="22" height="19" fill="#c35bc6" />
        <path d="M3 9h4v4H3zM3 16h4v4H3z" fill="#f1e6f2" />
      </svg>
      <button className="flex h-full w-[319px] items-center pl-[28px]">
        <FirefoxIcon className="size-6" />
        <span className="ml-3">[(65) Twitter / Home - ...</span>
      </button>
      <button className="flex h-full w-[302px] items-center border-x border-[#2b2a27] bg-[#33322f] pl-[11px] text-[#f3f1ec]">
        <OperaIcon className="h-6 w-[22px]" />
        <span className="ml-3.5">PLoS Computational ...</span>
      </button>
      <button className="flex h-full w-[303px] items-center border-r border-[#33322f] pl-3.5">
        <DocIcon />
        <span className="ml-3.5">Why researchers neee...</span>
      </button>
      <button className="flex h-full w-[305px] items-center border-r border-[#33322f] pl-3.5">
        <DocIcon />
        <span className="ml-3.5">OA libraries GE RU.od...</span>
      </button>
      <svg viewBox="0 0 28 32" className="mr-2 ml-auto h-8 w-7" aria-hidden="true">
        <path d="M3 5h22l-3 26H6z" fill="#7c7b78" stroke="#aaa9a6" strokeWidth="1.4" />
        <ellipse cx="14" cy="4" rx="12" ry="3" fill="#5a5956" stroke="#c9c8c5" strokeWidth="1.6" />
        <path d="M9 10l1 18M19 10l-1 18" stroke="#97968f" strokeWidth="1.6" />
      </svg>
      <div className="flex h-full py-0.5">
        <div className="flex w-[42px] items-center justify-center border-2 border-[#f6efe9] bg-[#f4a98f]">
          <OperaIcon className="h-[22px] w-[22px]" />
        </div>
        <div className="w-[41px] border-r border-[#4d4c48] bg-[#2d2c2a]" />
        <div className="w-[41px] border-r border-[#4d4c48] bg-[#2d2c2a]" />
        <div className="w-[42px] bg-[#2d2c2a]" />
      </div>
    </footer>
  );
}

export default function App() {
  return (
    <div className={`h-screen bg-[#3e4c50] pr-[51px] pl-[76px] ${uiFont}`}>
      <div className="flex h-full flex-col bg-white">
        <TopPanel />
        <TitleBar />
        <TabBar />
        <div className="flex min-h-0 flex-1">
          <SideBar />
          <div className="flex min-w-0 flex-1 flex-col">
            <AddressBar />
            <div className="flex min-h-0 flex-1">
              <main className={`relative min-w-0 flex-1 overflow-hidden bg-white ${pageFont}`}>
                <PageHeader />
                <div className="mx-auto flex max-w-[1500px] gap-[42px] pt-[53px] pr-[7px] pl-[33px]">
                  <Article />
                  <RightColumn />
                </div>
                <svg viewBox="0 0 20 32" className="absolute top-[1133px] left-[1326px] h-8 w-5" aria-hidden="true">
                  <path d="M1 1v25l6-5 4 9 4-2-4-9h8z" fill="#fff" stroke="#222" strokeWidth="1.8" />
                </svg>
              </main>
              <ScrollBar />
            </div>
          </div>
        </div>
        <StatusBar />
        <TaskBar />
      </div>
    </div>
  );
}
